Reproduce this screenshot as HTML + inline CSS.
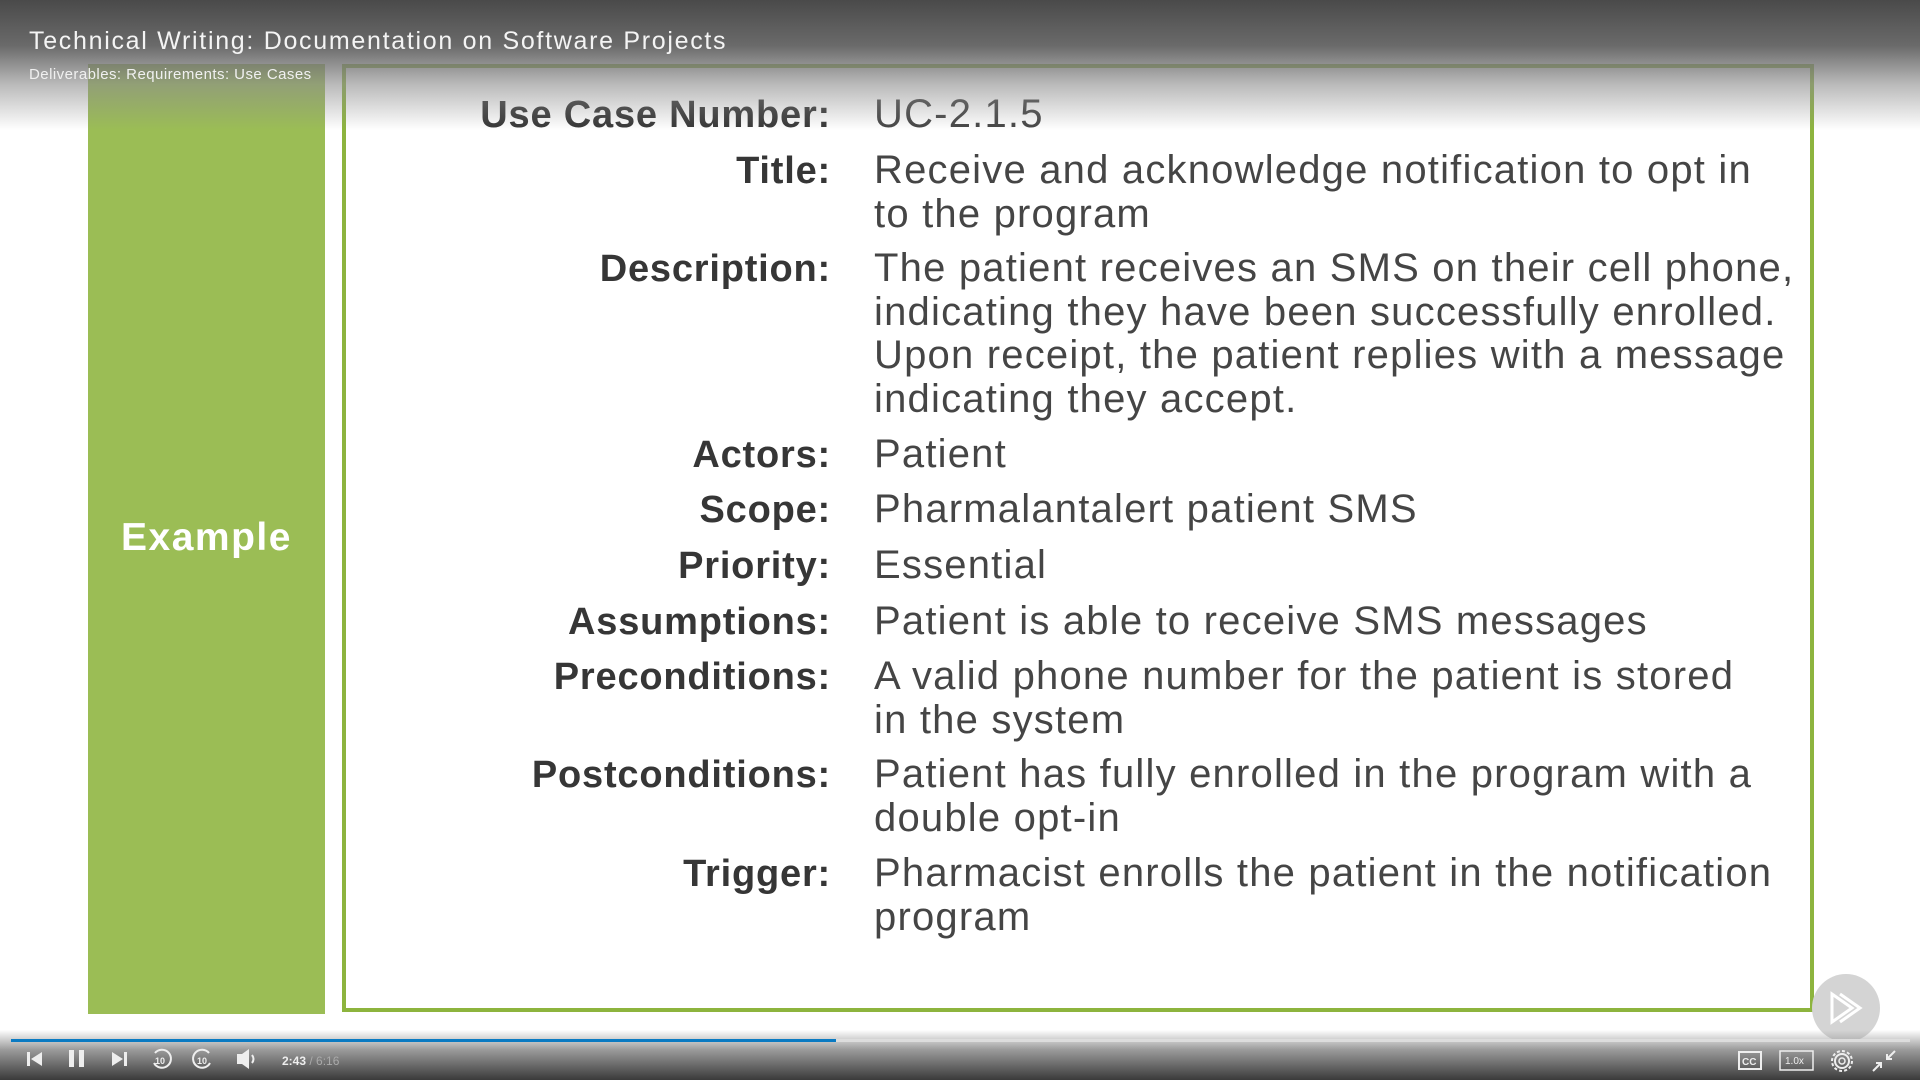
<!DOCTYPE html>
<html><head><meta charset="utf-8"><style>
*{margin:0;padding:0;box-sizing:border-box}
body{width:1920px;height:1080px;overflow:hidden;background:#fff;font-family:"Liberation Sans",sans-serif;position:relative}
.top{position:absolute;left:0;top:0;width:1920px;height:130px;background:linear-gradient(#4a4a4a 0%,#6a6a6a 35%,rgba(140,140,140,.6) 65%,rgba(255,255,255,0) 100%);z-index:2}
.title{position:absolute;left:29px;top:27px;color:#f4f4f4;font-size:25px;z-index:3;letter-spacing:1.7px}
.sub{position:absolute;left:29px;top:66px;color:#f0f0f0;font-size:15px;z-index:3;letter-spacing:.45px}
.green{position:absolute;left:88px;top:64px;width:237px;height:950px;background:#9bbd55}
.ex{position:absolute;left:88px;width:237px;top:516px;text-align:center;color:#fff;font-weight:bold;font-size:39px;z-index:1;letter-spacing:1.5px}
.box{position:absolute;left:342px;top:64px;width:1472px;height:948px;border:4px solid #8db43e}
.l{position:absolute;right:1089px;font-weight:bold;color:#363636;font-size:38px;line-height:44px;white-space:nowrap;letter-spacing:.8px}
.v{position:absolute;left:874px;color:#454545;font-size:40px;line-height:43.5px;white-space:nowrap;letter-spacing:1.2px}
.bar{position:absolute;left:0;top:1030px;width:1920px;height:50px;background:linear-gradient(rgba(255,255,255,0),#9a9a9a 40%,#3a3a3a)}
.track{position:absolute;left:11px;top:1039px;width:1899px;height:3px;background:#ddd}
.prog{position:absolute;left:11px;top:1039px;width:825px;height:3px;background:#0a7ac2}
.play{position:absolute;left:1812px;top:974px;width:68px;height:68px;border-radius:50%;background:#d4d4d4}
</style></head><body>
<div class="top"></div>
<div class="title">Technical Writing: Documentation on Software Projects</div>
<div class="sub">Deliverables: Requirements: Use Cases</div>
<div class="green"></div>
<div class="ex">Example</div>
<div class="box"></div>

<div class="l" style="top:93px">Use Case Number:</div>
<div class="v" style="top:93px">UC-2.1.5</div>
<div class="l" style="top:149px">Title:</div>
<div class="v" style="top:149px">Receive and acknowledge notification to opt in<br>to the program</div>
<div class="l" style="top:247px">Description:</div>
<div class="v" style="top:247px">The patient receives an SMS on their cell phone,<br>indicating they have been successfully enrolled.<br>Upon receipt, the patient replies with a message<br>indicating they accept.</div>
<div class="l" style="top:433px">Actors:</div>
<div class="v" style="top:433px">Patient</div>
<div class="l" style="top:488px">Scope:</div>
<div class="v" style="top:488px">Pharmalantalert patient SMS</div>
<div class="l" style="top:544px">Priority:</div>
<div class="v" style="top:544px">Essential</div>
<div class="l" style="top:600px">Assumptions:</div>
<div class="v" style="top:600px">Patient is able to receive SMS messages</div>
<div class="l" style="top:655px">Preconditions:</div>
<div class="v" style="top:655px">A valid phone number for the patient is stored<br>in the system</div>
<div class="l" style="top:753px">Postconditions:</div>
<div class="v" style="top:753px">Patient has fully enrolled in the program with a<br>double opt-in</div>
<div class="l" style="top:852px">Trigger:</div>
<div class="v" style="top:852px">Pharmacist enrolls the patient in the notification<br>program</div>

<div class="play"><svg width="68" height="68" viewBox="0 0 68 68"><path d="M20 20 L20 48 L40 34 Z M28 20 L48 34 L28 48" fill="none" stroke="#fff" stroke-width="3"/></svg></div>
<div class="bar"></div>
<div class="track"></div>
<div class="prog"></div>
<svg style="position:absolute;left:0;top:1046px" width="400" height="30" viewBox="0 0 400 30">
<g fill="#eee" stroke="none">
<rect x="27" y="6" width="3" height="14"/><path d="M42 6 L31 13 L42 20Z"/>
<rect x="69" y="4" width="5" height="17"/><rect x="79" y="4" width="5" height="17"/>
<path d="M112 6 L123 13 L112 20Z"/><rect x="124" y="6" width="3" height="14"/>
<path d="M237 8 h5 l7 -5 v20 l-7 -5 h-5z"/>
</g>
<g fill="none" stroke="#eee" stroke-width="2">
<path d="M155 7 A9 9 0 1 1 154 17"/><path d="M209 7 A9 9 0 1 0 210 17"/>
<path d="M252 9 q3 4 0 8"/>
</g>
<text x="155" y="18" font-size="9" fill="#eee" font-family="Liberation Sans" font-weight="bold">10</text>
<text x="197" y="18" font-size="9" fill="#eee" font-family="Liberation Sans" font-weight="bold">10</text>
<text x="282" y="19" font-size="12" fill="#eee" font-family="Liberation Sans" font-weight="bold">2:43 <tspan fill="#aaa" font-weight="normal">/ 6:16</tspan></text>
</svg>
<svg style="position:absolute;left:1730px;top:1046px" width="190" height="30" viewBox="0 0 190 30">
<rect x="9" y="6" width="22" height="17" fill="none" stroke="#eee" stroke-width="2"/>
<text x="12" y="19" font-size="10" fill="#eee" font-family="Liberation Sans" font-weight="bold">CC</text>
<rect x="50" y="5" width="33" height="19" fill="none" stroke="#eee" stroke-width="1.5"/>
<text x="55" y="18" font-size="10" fill="#eee" font-family="Liberation Sans">1.0x</text>
<circle cx="112" cy="15" r="7" fill="none" stroke="#eee" stroke-width="2"/><circle cx="112" cy="15" r="3" fill="none" stroke="#eee" stroke-width="1.5"/>
<circle cx="112" cy="15" r="10" fill="none" stroke="#eee" stroke-width="2" stroke-dasharray="3 2.2"/>
<path d="M143 25 L151 17 M146 17 h5 v5 M165 5 L157 13 M157 8 v5 h5" fill="none" stroke="#eee" stroke-width="2"/>
</svg>
</body></html>
